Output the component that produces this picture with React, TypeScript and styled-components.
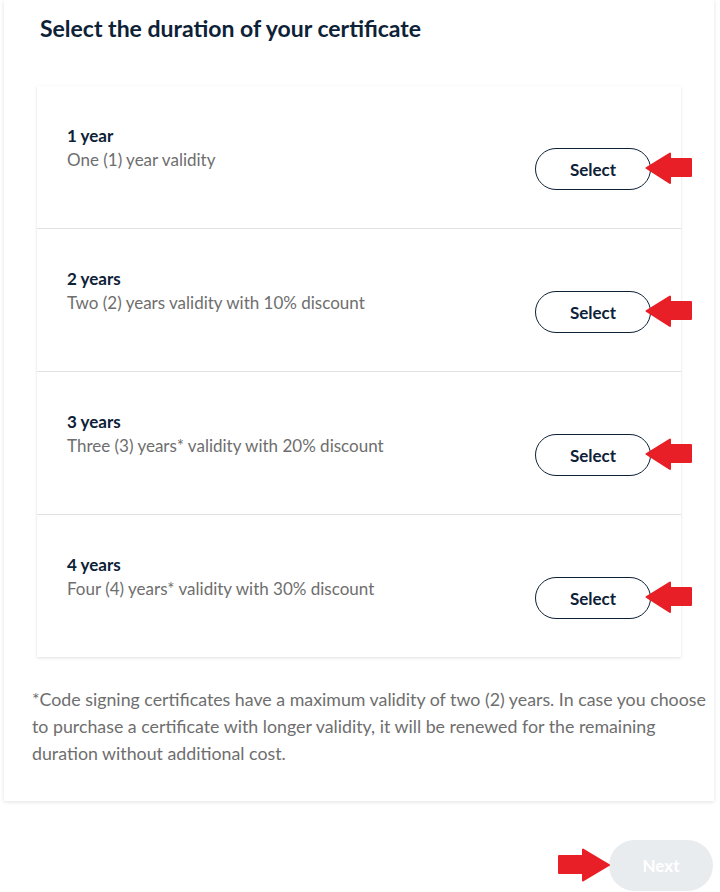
import styled, { createGlobalStyle } from "styled-components"

const GlobalStyle = createGlobalStyle`
    body {
        margin: 0;
        background: #ffffff;
        font-family: Lato, "Open Sans", sans-serif;
    }
`

const durations = [
    { title: "1 year", text: "One (1) year validity" },
    { title: "2 years", text: "Two (2) years validity with 10% discount" },
    { title: "3 years", text: "Three (3) years* validity with 20% discount" },
    { title: "4 years", text: "Four (4) years* validity with 30% discount" },
]

const Page = styled.div`
    width: 720px;
    height: 892px;
    overflow: hidden;
    display: flex;
    flex-direction: column;
`

const Card = styled.section`
    margin: 0 6px 0 4px;
    padding: 14px 4px 34px 28px;
    background: #fff;
    box-shadow: 0 1px 4px rgba(0, 0, 0, 0.12);
`

const Title = styled.h2`
    margin: 0 0 44px 8px;
    font-size: 23px;
    line-height: 28px;
    font-weight: 700;
    color: #0d2137;
`

const List = styled.div`
    margin-left: 5px;
    width: 644px;
    background: #fff;
    box-shadow: 0 1px 3px rgba(0, 0, 0, 0.13);
`

const Row = styled.div`
    display: flex;
    align-items: flex-start;
    justify-content: space-between;
    height: 143px;
    box-sizing: border-box;
    padding: 38px 30px 0 30px;
    border-bottom: 1px solid #e2e2e2;
    &:last-child {
        border-bottom: none;
        height: 142px;
    }
`

const RowText = styled.div`
    display: flex;
    flex-direction: column;
`

const RowTitle = styled.span`
    font-size: 17px;
    line-height: 24px;
    font-weight: 700;
    color: #0d2137;
`

const RowDesc = styled.span`
    font-size: 17px;
    line-height: 24px;
    color: #6e6e6e;
`

const SelectWrap = styled.div`
    position: relative;
    margin-top: 24px;
`

const SelectButton = styled.button`
    width: 116px;
    height: 42px;
    border: 1px solid #0d2137;
    border-radius: 21px;
    background: #fff;
    font-family: Lato, sans-serif;
    font-size: 17px;
    font-weight: 700;
    color: #0d2137;
    cursor: pointer;
`

const ArrowMark = styled.svg<{ $left: number; $top: number }>`
    position: absolute;
    left: ${p => p.$left}px;
    top: ${p => p.$top}px;
    pointer-events: none;
`

const Note = styled.p`
    margin: 29px 0 0 0;
    font-size: 17.8px;
    line-height: 27px;
    color: #6e6e6e;
`

const Footer = styled.div`
    display: flex;
    justify-content: flex-end;
    padding: 39px 7px 0 0;
`

const NextWrap = styled.div`
    position: relative;
`

const NextButton = styled.button`
    width: 104px;
    height: 51px;
    border: none;
    border-radius: 26px;
    background: #e9ecef;
    color: #fff;
    font-family: Lato, sans-serif;
    font-size: 17px;
    font-weight: 700;
`

const LeftArrow = () => (
    <ArrowMark $left={110} $top={4} width="48" height="33" viewBox="0 0 48 33">
        <polygon
            points="1.5,16 25,1.5 25,7 46,7 46,24 25,24 25,31"
            fill="#e81f26"
            stroke="#e81f26"
            strokeWidth="2"
            strokeLinejoin="round"
        />
    </ArrowMark>
)

const RightArrow = () => (
    <ArrowMark $left={-51} $top={8} width="53" height="34" viewBox="0 0 53 34">
        <polygon
            points="1,8 25,8 25,1.5 51,17 25,32.5 25,25 1,25"
            fill="#e81f26"
            stroke="#e81f26"
            strokeWidth="2"
            strokeLinejoin="round"
        />
    </ArrowMark>
)

const App = () => {
    return (
        <Page>
            <GlobalStyle />
            <Card>
                <Title>Select the duration of your certificate</Title>
                <List>
                    {durations.map(d => (
                        <Row key={d.title}>
                            <RowText>
                                <RowTitle>{d.title}</RowTitle>
                                <RowDesc>{d.text}</RowDesc>
                            </RowText>
                            <SelectWrap>
                                <SelectButton>Select</SelectButton>
                                <LeftArrow />
                            </SelectWrap>
                        </Row>
                    ))}
                </List>
                <Note>
                    *Code signing certificates have a maximum validity of two (2) years. In case you choose to purchase
                    a certificate with longer validity, it will be renewed for the remaining duration without additional
                    cost.
                </Note>
            </Card>
            <Footer>
                <NextWrap>
                    <NextButton>Next</NextButton>
                    <RightArrow />
                </NextWrap>
            </Footer>
        </Page>
    )
}

export default App
